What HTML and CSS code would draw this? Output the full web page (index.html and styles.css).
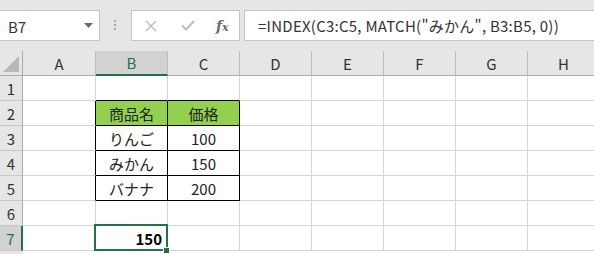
FILE: index.html
```html
<!DOCTYPE html>
<html lang="ja">
<head>
<meta charset="utf-8">
<link rel="stylesheet" href="styles.css">
</head>
<body>
<div class="toolbar">
  <div class="namebox">
    <span class="name">B7</span>
    <svg class="arrow" width="9" height="5" viewBox="0 0 9 5"><path d="M0 0H9L4.5 5Z" fill="#6a6a6a"/></svg>
  </div>
  <div class="grip">
    <svg width="3" height="11" viewBox="0 0 3 11"><rect x="0" y="0" width="2" height="2" fill="#a8a8a8"/><rect x="0" y="4" width="2" height="2" fill="#a8a8a8"/><rect x="0" y="8" width="2" height="2" fill="#a8a8a8"/></svg>
  </div>
  <div class="buttons">
    <svg class="btn" width="12" height="12" viewBox="0 0 12 12"><path d="M1 1L11 11M11 1L1 11" stroke="#bdbdbd" stroke-width="1.5" fill="none"/></svg>
    <svg class="btn" width="14" height="11" viewBox="0 0 14 11"><path d="M1 5.5L5 9.5L13 1" stroke="#bdbdbd" stroke-width="2" fill="none"/></svg>
    <span class="fx">f<span class="x">x</span></span>
  </div>
  <div class="formula">=INDEX(C3:C5, MATCH("みかん", B3:B5, 0))</div>
</div>
<div class="sheet">
  <div class="corner"><svg width="16" height="16" viewBox="0 0 16 16"><path d="M16 0V16H0Z" fill="#b8b8b8"/></svg></div>
  <div class="ch">A</div><div class="ch sel">B</div><div class="ch">C</div><div class="ch">D</div><div class="ch">E</div><div class="ch">F</div><div class="ch">G</div><div class="ch">H</div>

  <div class="rh">1</div>
  <div class="c"></div><div class="c bb"></div><div class="c bb"></div><div class="c"></div><div class="c"></div><div class="c"></div><div class="c"></div><div class="c"></div>

  <div class="rh">2</div>
  <div class="c br"></div><div class="c t hd">商品名</div><div class="c t hd">価格</div><div class="c"></div><div class="c"></div><div class="c"></div><div class="c"></div><div class="c"></div>

  <div class="rh">3</div>
  <div class="c br"></div><div class="c t">りんご</div><div class="c t">100</div><div class="c"></div><div class="c"></div><div class="c"></div><div class="c"></div><div class="c"></div>

  <div class="rh">4</div>
  <div class="c br"></div><div class="c t">みかん</div><div class="c t">150</div><div class="c"></div><div class="c"></div><div class="c"></div><div class="c"></div><div class="c"></div>

  <div class="rh">5</div>
  <div class="c br"></div><div class="c t">バナナ</div><div class="c t">200</div><div class="c"></div><div class="c"></div><div class="c"></div><div class="c"></div><div class="c"></div>

  <div class="rh">6</div>
  <div class="c"></div><div class="c"></div><div class="c"></div><div class="c"></div><div class="c"></div><div class="c"></div><div class="c"></div><div class="c"></div>

  <div class="rh sel">7</div>
  <div class="c"></div><div class="c active">150</div><div class="c"></div><div class="c"></div><div class="c"></div><div class="c"></div><div class="c"></div><div class="c"></div>
</div>
</body>
</html>
```

FILE: styles.css
```css
html, body {
  margin: 0;
  padding: 0;
  overflow: hidden;
  width: 594px;
  height: 254px;
  background: #ffffff;
  font-family: "Noto Sans CJK JP", "Noto Sans", sans-serif;
}

.toolbar {
  height: 51px;
  background: #e6e6e6;
  display: flex;
  align-items: flex-start;
  padding-top: 10px;
  box-sizing: border-box;
  width: 594px;
  overflow: hidden;
}

.namebox {
  flex: none;
  width: 101px;
  height: 31px;
  box-sizing: border-box;
  margin-left: -1px;
  background: #fff;
  border: 1px solid #c6c6c6;
  display: flex;
  align-items: center;
  padding-left: 8px;
  padding-right: 6px;
}

.name {
  font-size: 15px;
  color: #333;
  flex: 1;
  line-height: 1;
  padding-top: 2px;
}

.arrow {
  display: block;
}

.grip {
  flex: none;
  width: 31px;
  height: 31px;
  display: flex;
  align-items: center;
  justify-content: center;
}

.grip svg {
  display: block;
}

.buttons {
  flex: none;
  width: 109px;
  height: 31px;
  box-sizing: border-box;
  background: #fff;
  border: 1px solid #c6c6c6;
  display: flex;
  align-items: center;
  padding-left: 13px;
}

.btn {
  display: block;
}

.buttons .btn:first-child {
  margin-right: 24px;
}

.fx {
  margin-left: 21px;
  font-family: "DejaVu Serif", "Liberation Serif", serif;
  font-style: italic;
  font-size: 14px;
  font-weight: bold;
  color: #6a6a6a;
  line-height: 1;
}

.fx .x {
  font-size: 11px;
}

.formula {
  flex: none;
  margin-left: 4px;
  width: 360px;
  height: 31px;
  box-sizing: border-box;
  background: #fff;
  border: 1px solid #c6c6c6;
  font-size: 15px;
  letter-spacing: 0.25px;
  color: #333;
  line-height: 29px;
  padding-left: 13px;
  white-space: nowrap;
}

.sheet {
  display: grid;
  grid-template-columns: 23px 73px repeat(7, 72px);
  grid-template-rows: repeat(8, 25px);
  height: 203px;
  width: 594px;
  overflow: hidden;
  font-size: 15px;
  color: #222;
  background: #fff;
  box-shadow: inset 23px 0 0 #e6e6e6;
}

.corner,
.ch,
.rh {
  background: #e6e6e6;
  box-sizing: border-box;
  display: flex;
  align-items: center;
  justify-content: center;
  color: #333;
}

.corner {
  border-right: 1px solid #ababab;
  border-bottom: 1px solid #ababab;
  align-items: flex-end;
  justify-content: flex-end;
  padding: 0 3px 3px 0;
}

.corner svg {
  display: block;
}

.ch {
  border-right: 1px solid #bdbdbd;
  border-bottom: 1px solid #ababab;
}

.ch.sel {
  background: #d2d2d2;
  color: #217346;
  border-bottom: 2px solid #217346;
}

.rh {
  border-right: 1px solid #ababab;
  border-bottom: 1px solid #c8c8c8;
}

.rh.sel {
  background: #d2d2d2;
  color: #217346;
  border-right: 2px solid #217346;
}

.c {
  box-sizing: border-box;
  border-right: 1px solid #d4d4d4;
  border-bottom: 1px solid #d4d4d4;
  display: flex;
  align-items: center;
  justify-content: center;
}

.c.bb {
  border-bottom-color: #000;
}

.c.br {
  border-right-color: #000;
}

.c.t {
  border-right-color: #000;
  border-bottom-color: #000;
}

.c.hd {
  background: #92d050;
}

.c.active {
  position: relative;
  justify-content: flex-end;
  padding-right: 5px;
  font-weight: bold;
  color: #000;
}

.c.active::after {
  content: "";
  position: absolute;
  left: -2px;
  top: -2px;
  right: -1px;
  bottom: -1px;
  border: 2px solid #217346;
}

.c.active::before {
  content: "";
  position: absolute;
  right: -3px;
  bottom: -4px;
  width: 5px;
  height: 5px;
  background: #217346;
  border: 1px solid #fff;
  z-index: 2;
}
```
